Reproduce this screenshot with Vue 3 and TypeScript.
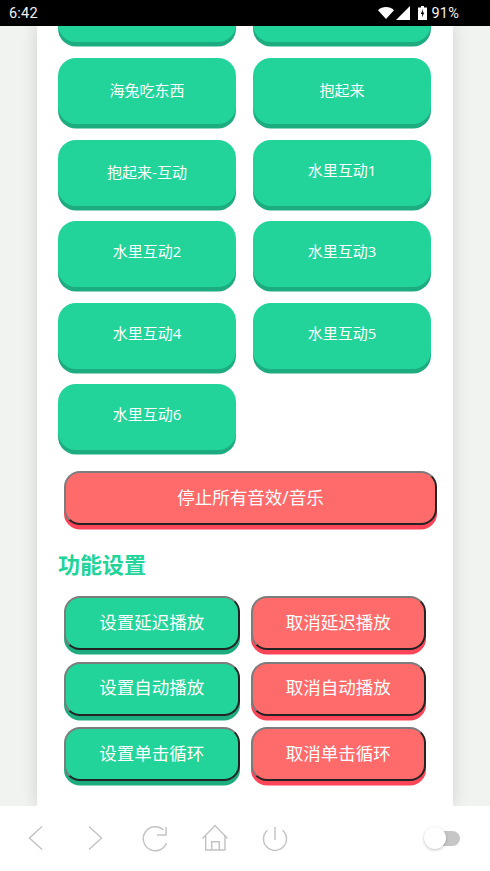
<script setup lang="ts">
const effects: string[] = ['', '', '海兔吃东西', '抱起来', '抱起来-互动', '水里互动1', '水里互动2', '水里互动3', '水里互动4', '水里互动5', '水里互动6']
const settings: [string, string][] = [
  ['设置延迟播放', '取消延迟播放'],
  ['设置自动播放', '取消自动播放'],
  ['设置单击循环', '取消单击循环'],
]
const endsWithDigit = (label: string): boolean => /\d$/.test(label)
</script>

<template>
  <div class="screen">
    <header class="status">
      <span class="time">6:42</span>
      <div class="status-right">
        <svg class="wifi" viewBox="0 0 16 12" width="16" height="12"><path d="M0 3.2C2.2 1.2 5 0 8 0s5.800 1.200 8 3.200L8 12z" fill="#fff" /></svg>
        <svg class="signal" viewBox="0 0 14 14" width="14" height="14"><path d="M14 0v14H0z" fill="#fff" /></svg>
        <svg class="battery" viewBox="0 0 9 14" width="9" height="14">
          <path d="M3 0h3v1.500h3V14H0V1.500h3z" fill="#fff" />
          <path d="M5 3 2.800 8h1.500L4 11.500 6.300 6.500H4.800z" fill="#000" />
        </svg>
        <span class="pct">91%</span>
      </div>
    </header>

    <main class="viewport">
      <div class="card">
        <div class="grid">
          <button v-for="(e, i) in effects" :key="i" class="fx" :class="{ raised: endsWithDigit(e) }">{{ e }}</button>
        </div>
        <button class="stop">停止所有音效/音乐</button>
        <h2 class="title">功能设置</h2>
        <div class="settings">
          <template v-for="row in settings" :key="row[0]">
            <button class="opt on">{{ row[0] }}</button>
            <button class="opt off">{{ row[1] }}</button>
          </template>
        </div>
      </div>
    </main>

    <footer class="nav">
      <div class="nav-icons">
        <svg viewBox="0 0 30 30" width="30" height="30"><path d="M21 3.500 8.500 15 21 26.500" /></svg>
        <svg viewBox="0 0 30 30" width="30" height="30"><path d="M8 3.500 20.500 15 8 26.500" /></svg>
        <svg viewBox="0 0 30 30" width="30" height="30"><path d="M22.500 7A12 12 0 1 0 25.500 20" /><path d="M25 4v8h-9" /></svg>
        <svg viewBox="0 0 30 30" width="30" height="30"><path d="M1.500 15.500 14 2.500l12.500 13" /><path d="M4.700 12v15H24V12" /><path d="M10.700 27v-8.300h7.600V27" /></svg>
        <svg viewBox="0 0 30 30" width="30" height="30"><path d="M14 4v13" /><path d="M6.500 7.200a11.500 11.500 0 1 0 15 0" /></svg>
      </div>
      <div class="toggle"><span class="knob"></span></div>
    </footer>
  </div>
</template>

<style scoped>
.screen {
  width: 490px;
  height: 871px;
  display: flex;
  flex-direction: column;
  overflow: hidden;
  font-family: "Open Sans", "Noto Sans CJK SC", sans-serif;
}
.status {
  flex: 0 0 26px;
  background: #000;
  color: #f2f2f2;
  display: flex;
  align-items: center;
  justify-content: space-between;
  padding: 0 31px 0 9px;
  font-family: Roboto, sans-serif;
  font-size: 14.5px;
  letter-spacing: 0.2px;
}
.status-right {
  display: flex;
  align-items: center;
}
.wifi { margin-right: 2px; }
.signal { margin-right: 8px; }
.battery { margin-right: 4px; }
.viewport {
  flex: 1;
  min-height: 0;
  overflow: hidden;
  background: #f1f3f1;
}
.card {
  display: flow-root;
  width: 416px;
  height: 780px;
  margin: 0 0 0 37px;
  background: #fff;
  box-shadow: 0 0 16px rgba(0, 0, 0, 0.14);
  padding: 0 16px 0 21px;
  box-sizing: border-box;
  clip-path: inset(0 -20px 0 -20px);
}
button {
  border: 0;
  padding: 0;
  color: #fff;
  font-family: inherit;
  display: block;
}
.grid {
  display: grid;
  grid-template-columns: 178px 178px;
  column-gap: 17px;
  row-gap: 15.670px;
  margin-top: -49.800px;
}
.fx {
  height: 66px;
  padding-bottom: 3px;
  border-radius: 18px;
  background: #22d49a;
  box-shadow: 0 4.500px 0 #1dab80;
  font-size: 15px;
}
.fx.raised {
  padding-bottom: 7px;
}
.stop {
  width: 373px;
  height: 54px;
  padding-bottom: 4px;
  margin: 20.700px 0 0 6px;
  border-radius: 16px;
  background: #ff6b6b;
  border: 2px solid;
  border-color: #7c7c7c #232323 #232323 #7c7c7c;
  box-shadow: 0 4.500px 0 #fb4558;
  font-size: 17.500px;
  box-sizing: border-box;
}
.title {
  margin: 24px 0 0;
  color: #22d49a;
  font-size: 22px;
  line-height: 30px;
  font-weight: 700;
}
.settings {
  display: grid;
  grid-template-columns: 175.500px 175.500px;
  column-gap: 11px;
  row-gap: 11.500px;
  margin: 17px 0 0 6px;
}
.opt {
  height: 54px;
  padding-bottom: 4px;
  border-radius: 16px;
  border: 2px solid;
  border-color: #7c7c7c #232323 #232323 #7c7c7c;
  font-size: 17.500px;
  box-sizing: border-box;
}
.on { background: #22d49a; box-shadow: 0 4.500px 0 #1dab80; }
.off { background: #ff6b6b; box-shadow: 0 4.500px 0 #fb4558; }
.nav {
  flex: 0 0 65px;
  box-sizing: border-box;
  background: #fff;
  display: flex;
  align-items: center;
  justify-content: space-between;
  padding: 0 30px 1px 21px;
  position: relative;
}
.nav-icons {
  display: flex;
  gap: 30px;
}
.nav-icons svg {
  fill: none;
  stroke: #c4c4c4;
  stroke-width: 1.500;
}
.toggle {
  width: 28px;
  height: 15px;
  border-radius: 8px;
  background: #c6c6c6;
  position: relative;
}
.knob {
  position: absolute;
  left: -8px;
  top: -4px;
  width: 22px;
  height: 22px;
  border-radius: 50%;
  background: #fff;
  box-shadow: 0 1px 3px rgba(0, 0, 0, 0.25);
}
</style>
